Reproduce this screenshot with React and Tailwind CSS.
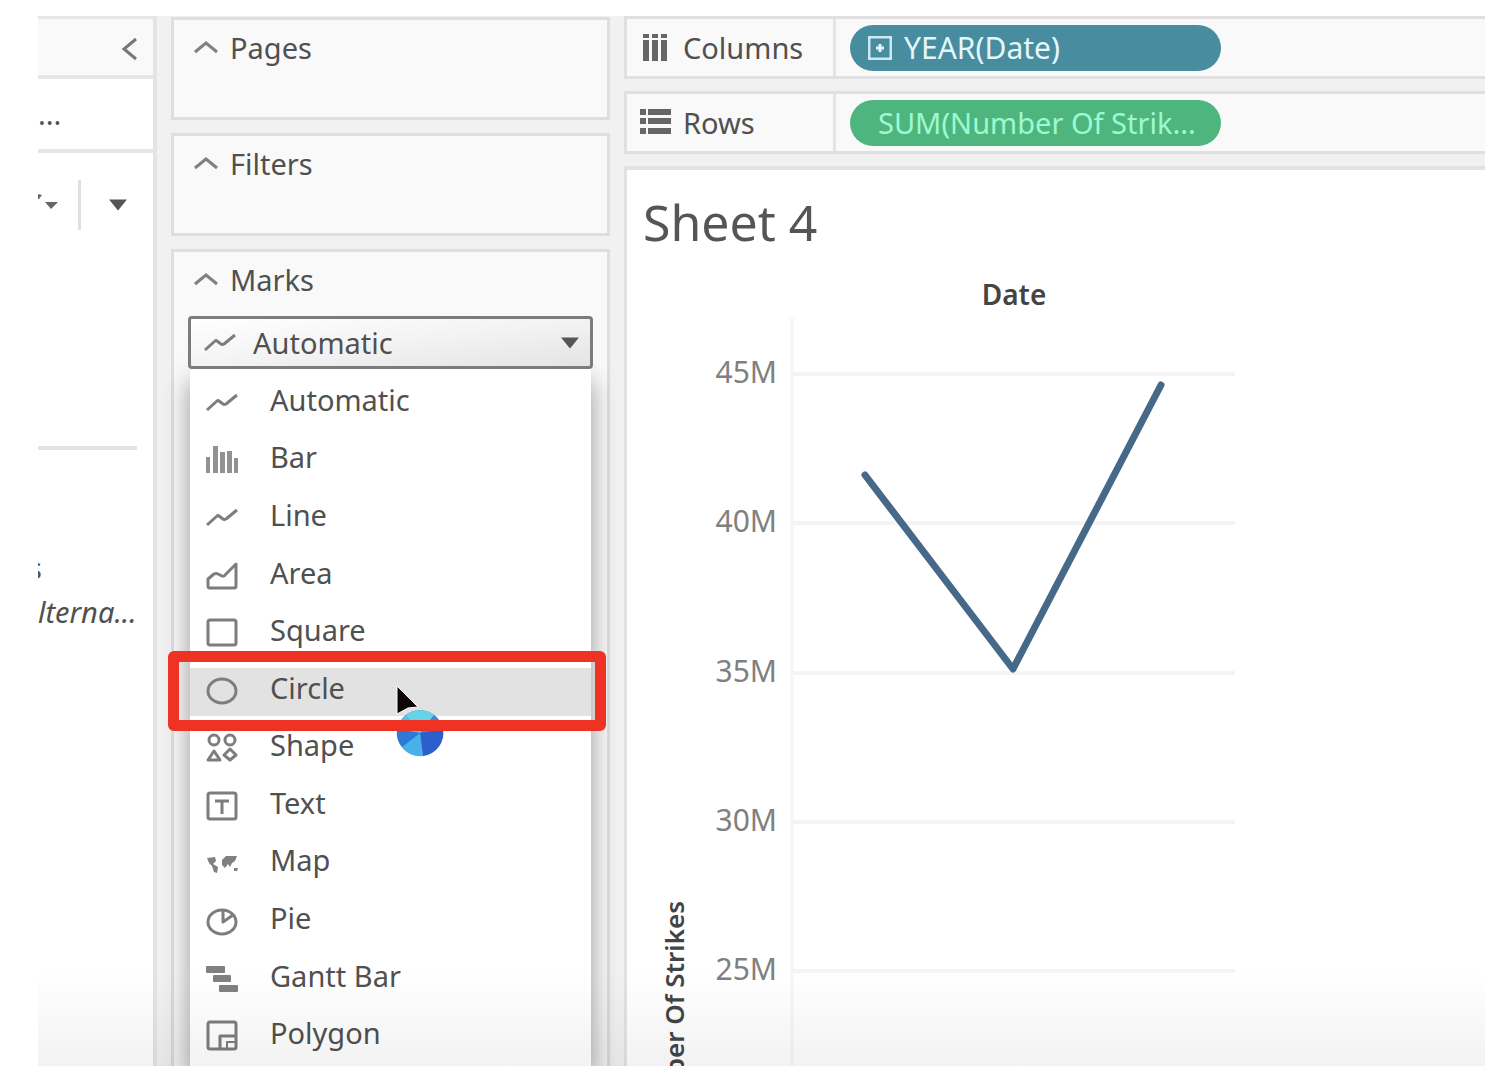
import React from "react";

const stroke = { fill: "none", stroke: "#7d7d7d", strokeWidth: 3, strokeLinejoin: "round" };

function Icon({ children }) {
  return (
    <svg className="h-8 w-8 shrink-0" viewBox="0 0 32 32" aria-hidden="true">
      {children}
    </svg>
  );
}

const LineIcon = () => (
  <Icon>
    <path d="M1 23 L11 14 Q12 13 13 14 L17 17 Q18 18 20 17 L31 8" {...stroke} />
  </Icon>
);

const BarIcon = () => (
  <Icon>
    <g fill="#929292">
      <rect x="0" y="13" width="4" height="16" />
      <rect x="7" y="2" width="5" height="27" />
      <rect x="14" y="8" width="5" height="21" />
      <rect x="21" y="7" width="5" height="22" />
      <rect x="28" y="14" width="4" height="15" />
    </g>
  </Icon>
);

const AreaIcon = () => (
  <Icon>
    <path d="M2 19 L8 14 Q10 13 12 14 L16 16 Q18 17 20 14 L30 4 V26 Q30 28 28 28 H4 Q2 28 2 26 Z" {...stroke} />
  </Icon>
);

const SquareIcon = () => (
  <Icon>
    <rect x="2" y="3" width="28" height="25" rx="2" {...stroke} />
  </Icon>
);

const CircleIcon = () => (
  <Icon>
    <ellipse cx="16" cy="16" rx="14" ry="12" {...stroke} />
  </Icon>
);

const ShapeIcon = () => (
  <Icon>
    <g {...stroke}>
      <circle cx="8" cy="8" r="5" />
      <circle cx="24" cy="8" r="5" />
      <path d="M8 19 L14 28 H2 Z" />
      <path d="M24 17 L30 23 L24 28 L18 23 Z" />
    </g>
  </Icon>
);

const TextIcon = () => (
  <Icon>
    <rect x="2" y="3" width="28" height="26" rx="2" {...stroke} />
    <path d="M9 11 H23 M16 11 V24" {...stroke} />
  </Icon>
);

const MapIcon = () => (
  <Icon>
    <path
      d="M1 11 L9 10 L10 14 L7 17 L12 20 L11 26 L8 25 L6 19 L3 16 Z M16 13 L20 9 L31 9 L29 14 L26 16 L24 20 L22 17 L19 21 L16 18 Z M28 21 L32 21 L31 24 L28 24 Z"
      fill="#808080"
    />
  </Icon>
);

const PieIcon = () => (
  <Icon>
    <ellipse cx="16" cy="17" rx="14" ry="12" {...stroke} />
    <path d="M17 5 V17 L27 10" {...stroke} />
  </Icon>
);

const GanttIcon = () => (
  <Icon>
    <g fill="#808080">
      <rect x="0" y="3" width="19" height="7" rx="1" />
      <rect x="7" y="12" width="18" height="7" rx="1" />
      <rect x="13" y="22" width="19" height="7" rx="1" />
    </g>
  </Icon>
);

const PolygonIcon = () => (
  <Icon>
    <rect x="2" y="2" width="28" height="27" rx="2" {...stroke} />
    <path d="M14 29 V16 H30" {...stroke} />
    <path d="M21 29 V22 H30" {...stroke} strokeWidth="2" />
  </Icon>
);

const markTypes = [
  { name: "Automatic", icon: LineIcon },
  { name: "Bar", icon: BarIcon },
  { name: "Line", icon: LineIcon },
  { name: "Area", icon: AreaIcon },
  { name: "Square", icon: SquareIcon },
  { name: "Circle", icon: CircleIcon, hovered: true },
  { name: "Shape", icon: ShapeIcon },
  { name: "Text", icon: TextIcon },
  { name: "Map", icon: MapIcon },
  { name: "Pie", icon: PieIcon },
  { name: "Gantt Bar", icon: GanttIcon },
  { name: "Polygon", icon: PolygonIcon },
];

function Caret({ className }) {
  return (
    <svg className={className} viewBox="0 0 20 12" aria-hidden="true">
      <path d="M0 0 H20 L10 12 Z" fill="#555" />
    </svg>
  );
}

function CardHeader({ title }) {
  return (
    <button type="button" className="flex h-14 w-full items-center gap-3 pl-5 text-left">
      <svg className="h-4 w-6" viewBox="0 0 24 16" aria-hidden="true">
        <path d="M1 12 L12 3 L23 12" fill="none" stroke="#808080" strokeWidth="3" />
      </svg>
      <span className="text-[29px] leading-8">{title}</span>
    </button>
  );
}

function DataPane() {
  return (
    <aside className="flex w-[119px] shrink-0 flex-col overflow-hidden border-r-4 border-[#e4e4e4] bg-white">
      <div className="flex h-[63px] shrink-0 items-center justify-end border-t-3 border-b-4 border-[#e6e6e6] bg-[#f9f9f9] pr-4">
        <button type="button" aria-label="Collapse pane" className="pt-1">
          <svg className="h-6 w-4" viewBox="0 0 16 24" aria-hidden="true">
            <path d="M15 2 L3 12 L15 22" fill="none" stroke="#777" strokeWidth="3" />
          </svg>
        </button>
      </div>
      <div className="flex h-[74px] shrink-0 items-center border-b-4 border-[#e6e6e6]">
        <span className="text-[29px] leading-8">...</span>
      </div>
      <div className="flex h-[103px] shrink-0 items-center">
        <svg className="h-6 w-5" viewBox="0 0 20 24" aria-hidden="true">
          <path d="M0 1 L4 2 L1 6 H0 Z M7 9 H20 L13 16 Z" fill="#666" />
        </svg>
        <span className="ml-5 h-[50px] w-[3px] bg-[#e0e0e0]" />
        <button type="button" aria-label="Pane menu" className="ml-7">
          <Caret className="h-3 w-[18px]" />
        </button>
      </div>
      <div className="mr-4 h-[194px] shrink-0 border-b-4 border-[#e4e4e4]" />
      <div className="mt-[102px] flex w-1 justify-end overflow-hidden text-[29px] leading-8">s</div>
      <div className="mt-3 text-[29px] leading-8 italic">lterna...</div>
    </aside>
  );
}

function BusyPointer() {
  return (
    <svg
      className="pointer-events-none absolute top-6 left-[205px] z-10 h-[74px] w-[52px]"
      viewBox="0 0 52 74"
      aria-hidden="true"
    >
      <path d="M2 3 L23 24 L13 25 L2 31 Z" fill="#0d0508" stroke="#fff" strokeWidth="1" />
      <g transform="translate(25 50)">
        <circle r="23" fill="#3f9fe6" />
        <path d="M0 0 L-23 -4 A23 23 0 0 1 -14 -18 Z" fill="#59bfe9" />
        <path d="M0 0 L-14 -18 A23 23 0 0 1 14 -18 Z" fill="#67d3e6" />
        <path d="M0 0 L14 -18 A23 23 0 0 1 23 -4 Z" fill="#3a8be0" />
        <path d="M0 0 L23 -4 A23 23 0 0 1 3 23 Z" fill="#2c5fcb" />
        <path d="M0 0 L3 23 A23 23 0 0 1 -18 14 Z" fill="#48b1ea" />
        <path d="M0 0 L-18 14 A23 23 0 0 1 -23 -4 Z" fill="#2f79d6" />
      </g>
    </svg>
  );
}

function MarksCard() {
  return (
    <section className="flex min-h-0 flex-1 flex-col border-3 border-b-0 border-[#dedede] bg-[#f9f9f9]">
      <CardHeader title="Marks" />
      <div className="mx-3.5 mt-2 flex min-h-0 flex-1 flex-col">
        <div className="relative z-10 h-[53px] shrink-0">
          <select
            aria-label="Mark type"
            defaultValue="Automatic"
            className="h-full w-full appearance-none rounded-sm border-3 border-[#7c7c7c] bg-linear-to-br from-white via-[#f3f3f3] to-[#e4e4e4] pl-[62px] text-[29px] leading-8"
          >
            {markTypes.map((m) => (
              <option key={m.name}>{m.name}</option>
            ))}
          </select>
          <div className="pointer-events-none absolute inset-0 flex items-center justify-between pr-3.5 pl-4">
            <LineIcon />
            <Caret className="h-3 w-[18px]" />
          </div>
        </div>
        <ul className="mx-0.5 flex min-h-0 flex-1 flex-col bg-white pt-0.5 pb-1 shadow-[0_12px_24px_rgba(0,0,0,0.4)]">
          {markTypes.map(({ name, icon: Glyph, hovered }) => (
            <li
              key={name}
              className={
                hovered
                  ? "relative min-h-0 flex-1 bg-linear-to-b from-white from-15% via-[#e2e2e2] via-15% to-[#e2e2e2]"
                  : "min-h-0 flex-1"
              }
            >
              <button type="button" className="flex h-full w-full items-center gap-8 pl-4 text-left">
                <span className="pt-1.5">
                  <Glyph />
                </span>
                <span className="text-[29px] leading-8">{name}</span>
              </button>
              {hovered && (
                <>
                  <BusyPointer />
                  <div className="pointer-events-none absolute -top-2 -right-[15px] -left-[22px] z-20 h-20 rounded-md border-11 border-[#ee3224]" />
                </>
              )}
            </li>
          ))}
        </ul>
      </div>
    </section>
  );
}

function Shelf({ label, icon, children }) {
  return (
    <div className="flex h-[63px] shrink-0 border-3 border-r-0 border-[#e0e0e0] bg-[#f9f9f9]">
      <div className="flex w-[209px] shrink-0 items-center gap-3 border-r-3 border-[#e4e4e4] pl-3">
        {icon}
        <span className="text-[29px] leading-8">{label}</span>
      </div>
      <div className="flex items-center pl-3.5">{children}</div>
    </div>
  );
}

const ColumnsIcon = () => (
  <svg className="h-8 w-8" viewBox="0 0 32 32" aria-hidden="true">
    <g fill="#666">
      {[4, 13, 22].map((x) => (
        <g key={x}>
          <rect x={x} y="2" width="6" height="4" />
          <rect x={x} y="8" width="6" height="21" />
        </g>
      ))}
    </g>
  </svg>
);

const RowsIcon = () => (
  <svg className="h-8 w-8" viewBox="0 0 32 32" aria-hidden="true">
    <g fill="#666">
      {[2, 11, 21].map((y) => (
        <g key={y}>
          <rect x="1" y={y} width="6" height="6" />
          <rect x="9" y={y} width="23" height="6" />
        </g>
      ))}
    </g>
  </svg>
);

const ticks = [
  { label: "45M", y: 204 },
  { label: "40M", y: 353 },
  { label: "35M", y: 503 },
  { label: "30M", y: 652 },
  { label: "25M", y: 801 },
];

function Chart() {
  return (
    <svg
      className="absolute top-0 left-0 h-full w-[640px]"
      role="img"
      aria-label="Number Of Strikes by Date"
    >
      <line x1="165" y1="148" x2="165" y2="1000" stroke="#f6f6f6" strokeWidth="3" />
      <text x="387" y="135" textAnchor="middle" fontSize="28" fontWeight="600" fill="#444">
        Date
      </text>
      {ticks.map(({ label, y }) => (
        <g key={label}>
          <line x1="165" y1={y} x2="608" y2={y} stroke="#f4f4f4" strokeWidth="4" />
          <text x="150" y={y + 9} textAnchor="end" fontSize="30" fill="#808080">
            {label}
          </text>
        </g>
      ))}
      <text
        transform="translate(57 731) rotate(-90)"
        textAnchor="end"
        fontSize="26"
        fontWeight="600"
        fill="#444"
      >
        Number Of Strikes
      </text>
      <polyline
        points="238,305 386,499 534,215"
        fill="none"
        stroke="#46698a"
        strokeWidth="7"
        strokeLinecap="round"
        strokeLinejoin="round"
      />
    </svg>
  );
}

function Worksheet() {
  return (
    <main className="flex min-w-0 flex-1 flex-col gap-3">
      <Shelf label="Columns" icon={<ColumnsIcon />}>
        <button
          type="button"
          className="flex h-[46px] w-[371px] items-center gap-3 rounded-full bg-[#488d9f] pl-[18px] text-[30px] leading-8 text-[#e4f6fa]"
        >
          <svg className="h-6 w-6" viewBox="0 0 24 24" aria-hidden="true">
            <rect x="1" y="1" width="22" height="22" fill="none" stroke="#c9eaf1" strokeWidth="3" />
            <path d="M8 12 H16 M12 8 V16" stroke="#e4f6fa" strokeWidth="3" />
          </svg>
          YEAR(Date)
        </button>
      </Shelf>
      <Shelf label="Rows" icon={<RowsIcon />}>
        <button
          type="button"
          className="flex h-[46px] w-[371px] items-center rounded-full bg-[#4fb57f] pl-7 text-[29px] leading-8 text-[#9dfad0]"
        >
          SUM(Number Of Strik...
        </button>
      </Shelf>
      <section className="relative min-h-0 flex-1 border-t-4 border-l-3 border-[#e2e2e2] bg-white">
        <h1 className="pt-5 pl-4 text-[50px] leading-16 text-[#555]">Sheet 4</h1>
        <Chart />
      </section>
    </main>
  );
}

export default function App() {
  return (
    <div className="h-screen bg-white pt-4 pr-[25px] pb-[18px] pl-[38px] font-['Noto_Sans',sans-serif] text-[#505050]">
      <div className="relative flex h-full overflow-hidden bg-[#f1f1f1]">
        <DataPane />
        <div className="mx-3.5 flex w-[439px] shrink-0 flex-col gap-[13px] pt-px">
          <section className="h-[103px] shrink-0 border-3 border-[#dedede] bg-[#f9f9f9]">
            <CardHeader title="Pages" />
          </section>
          <section className="h-[103px] shrink-0 border-3 border-[#dedede] bg-[#f9f9f9]">
            <CardHeader title="Filters" />
          </section>
          <MarksCard />
        </div>
        <Worksheet />
        <div className="pointer-events-none absolute inset-x-0 bottom-0 z-30 h-24 bg-linear-to-b from-transparent to-black/5" />
      </div>
    </div>
  );
}
